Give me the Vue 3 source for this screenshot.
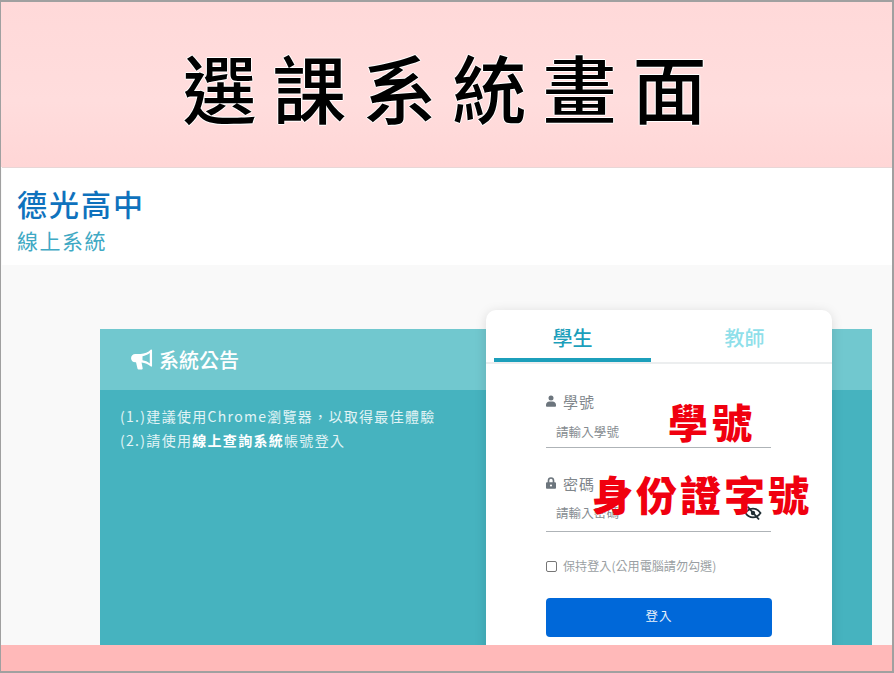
<template>
  <div class="frame" lang="zh-TW">
    <header class="banner"><h1 class="banner-title">選課系統畫面</h1></header>
    <section class="brand">
      <div class="school">德光高中</div>
      <div class="system">線上系統</div>
    </section>
    <main class="stage">
      <section class="notice">
        <div class="notice-head">
          <svg class="mega" viewBox="0 0 24 22" aria-hidden="true">
            <path fill="#fff" d="M22 1.2v16.6c0 .6-.7 1-1.2.6C18 16 14.6 14.6 11 14.2l1.2 6c.1.7-.4 1.3-1.1 1.3H7.9c-.5 0-1-.3-1.1-.8L5.2 14H4.4C2 14 0 12 0 9.6S2 5.2 4.4 5.2H10c4 0 8-1.600 10.800-4.600.5-.4 1.200-.1 1.200.6zM19.600 4.200C17.400 6 14.800 7.100 12 7.500v4.300c2.800.4 5.400 1.500 7.600 3.300z"/>
          </svg>
          <span>系統公告</span>
        </div>
        <div class="notice-body">
          <p>(1.)建議使用Chrome瀏覽器，以取得最佳體驗</p>
          <p>(2.)請使用<b>線上查詢系統</b>帳號登入</p>
        </div>
      </section>
      <section class="card">
        <div class="tabs">
          <div class="tab active">學生</div>
          <div class="tab">教師</div>
        </div>
        <form class="form" @submit.prevent>
          <div class="field">
            <label class="label">
              <svg class="ico" viewBox="0 0 12 14" aria-hidden="true"><circle cx="6" cy="3.400" r="3" fill="#6c757d"/><path fill="#6c757d" d="M1 14c-.6 0-1-.4-1-1v-1.500C0 9 2 7.500 4 7.500h4c2 0 4 1.500 4 4V13c0 .6-.4 1-1 1z"/></svg>
              學號
            </label>
            <div class="input-line"><span class="ph">請輸入學號</span></div>
            <span class="stamp stamp-id">學號</span>
          </div>
          <div class="field second">
            <label class="label">
              <svg class="ico" viewBox="0 0 12 14" aria-hidden="true"><path fill="#6c757d" d="M2 6V4a4 4 0 0 1 8 0v2h.6c.8 0 1.400.6 1.400 1.400v5.200c0 .8-.6 1.400-1.400 1.400H1.400C.6 14 0 13.400 0 12.600V7.400C0 6.600.6 6 1.400 6zm2 0h4V4a2 2 0 0 0-4 0z"/><circle cx="6" cy="10" r="1.300" fill="#fff"/></svg>
              密碼
            </label>
            <div class="input-line tall"><span class="ph">請輸入密碼</span>
              <svg class="eye" viewBox="0 0 18 16" aria-hidden="true"><path fill="none" stroke="#1f2d33" stroke-width="1.800" d="M1.500 8C3.500 5 6 3.700 9 3.700S14.500 5 16.500 8C14.500 11 12 12.300 9 12.300S3.500 11 1.500 8z"/><circle cx="9" cy="8" r="2.200" fill="#1f2d33"/><path stroke="#1f2d33" stroke-width="1.800" d="M3.500 1.500 15 14.500"/></svg>
            </div>
            <span class="stamp stamp-pw">身份證字號</span>
          </div>
          <label class="keep"><span class="box"></span>保持登入(公用電腦請勿勾選)</label>
          <button class="submit" type="button">登入</button>
        </form>
      </section>
    </main>
    <footer class="foot"></footer>
  </div>
</template>

<script setup>
</script>

<style>
html, body { margin: 0; overflow: hidden; }
</style>

<style scoped>
.frame {
  box-sizing: border-box;
  width: 894px;
  height: 673px;
  border-style: solid;
  border-color: #a0a0a0;
  border-width: 2px 2px 2px 1px;
  background: #f9f9f9;
  display: flex;
  flex-direction: column;
  overflow: hidden;
  font-family: "Noto Sans CJK TC", "Noto Sans", sans-serif;
}
.banner {
  height: 165px;
  flex: none;
  background: linear-gradient(#ffd9d9, #ffdddd 60%, #ffd6d6);
  display: flex;
  justify-content: center;
  align-items: center;
}
.banner-title {
  margin: 0 0 0 12px;
  font-family: "Noto Sans CJK TC", serif;
  font-weight: 500;
  font-size: 74px;
  line-height: 90px;
  letter-spacing: 16px;
  color: #000;
  text-shadow: 1px 0 #fff, -1px 0 #fff, 0 1px #fff, 0 -1px #fff;
  transform: translateY(1px);
}
.brand {
  height: 98px;
  flex: none;
  background: #fff;
  padding: 16px 0 0 15px;
  box-sizing: border-box;
  border-top: 1px solid #e8d6d6;
  margin-left: 1px;
}
.school {
  font-size: 30px;
  line-height: 38px;
  font-weight: 500;
  color: #0f72bd;
  letter-spacing: 2px;
}
.system {
  font-size: 21px;
  line-height: 28px;
  margin-top: 4px;
  color: #3fa9c4;
  letter-spacing: 1.500px;
}
.stage {
  flex: 1;
  min-height: 0;
  position: relative;
  padding: 64px 20px 0 99px;
  overflow: hidden;
}
.notice {
  height: 100%;
  background: #46b3bf;
  color: #fff;
}
.notice-head {
  height: 61px;
  background: #71c8cf;
  display: flex;
  align-items: center;
  padding-left: 31px;
  gap: 5px;
  font-size: 20px;
  font-weight: 500;
}
.mega { width: 23px; height: 21px; }
.notice-body {
  padding: 14px 0 0 20px;
  font-size: 14px;
  line-height: 24px;
  letter-spacing: 1.300px;
  color: #e2f4f6;
}
.notice-body p { margin: 0; }
.notice-body b { color: #fff; font-weight: 700; }
.card {
  position: absolute;
  left: 485px;
  top: 45px;
  width: 346px;
  height: 400px;
  background: #fff;
  border-radius: 10px 10px 0 0;
  box-shadow: 0 2px 12px rgba(0, 0, 0, .13);
}
.tabs {
  display: flex;
  height: 52px;
  padding-left: 8px;
  border-bottom: 2px solid #eceeef;
}
.tab {
  width: 157px;
  flex: none;
  text-align: center;
  font-size: 20px;
  line-height: 56px;
  color: #8fdfea;
  font-weight: 500;
  height: 52px;
  box-sizing: border-box;
}
.tab + .tab { width: 181px; padding-left: 6px; }
.tab.active {
  color: #1c9fbb;
  border-bottom: 4px solid #1c9fbb;
}
.form { padding: 23px 61px 0 60px; }
.field { position: relative; }
.field.second { margin-top: 21px; }
.label {
  display: flex;
  align-items: center;
  gap: 7px;
  height: 28px;
  font-size: 15px;
  color: #80868b;
  letter-spacing: 1px;
}
.ico { width: 10px; height: 12px; flex: none; }
.input-line {
  position: relative;
  height: 32px;
  border-bottom: 1px solid #aeb3b7;
  display: flex;
  align-items: center;
  padding: 0 0 0 10px;
}
.input-line.tall { height: 34px; }
.input-line.tall .ph { margin-bottom: 4px; }
.ph { font-size: 12.500px; color: #858b90; letter-spacing: .1px; }
.eye {
  position: absolute;
  right: 9px;
  top: 8px;
  width: 18px;
  height: 16px;
}
.stamp {
  position: absolute;
  font-family: "Noto Sans CJK TC", serif;
  font-weight: 900;
  color: #f0000f;
  line-height: 1;
  letter-spacing: 4px;
  white-space: nowrap;
}
.stamp-id { left: 122px; top: 14px; font-size: 40px; }
.stamp-pw { left: 46px; top: 4px; font-size: 41px; letter-spacing: 3px; }
.keep {
  display: flex;
  align-items: center;
  margin-top: 24px;
  font-size: 12.100px;
  line-height: 20px;
  color: #9a9fa3;
}
.box {
  width: 9px;
  height: 9px;
  border: 1px solid #767676;
  border-radius: 2px;
  margin-right: 6px;
  flex: none;
}
.submit {
  display: block;
  width: 226px;
  height: 39px;
  margin-top: 22px;
  padding: 0 0 4px;
  border: 0;
  border-radius: 4px;
  background: #0068d9;
  color: #e8f1fb;
  font-family: inherit;
  font-size: 12.500px;
  letter-spacing: 1px;
}
.foot {
  height: 26px;
  flex: none;
  background: #ffb9b9;
  position: relative;
}
</style>
